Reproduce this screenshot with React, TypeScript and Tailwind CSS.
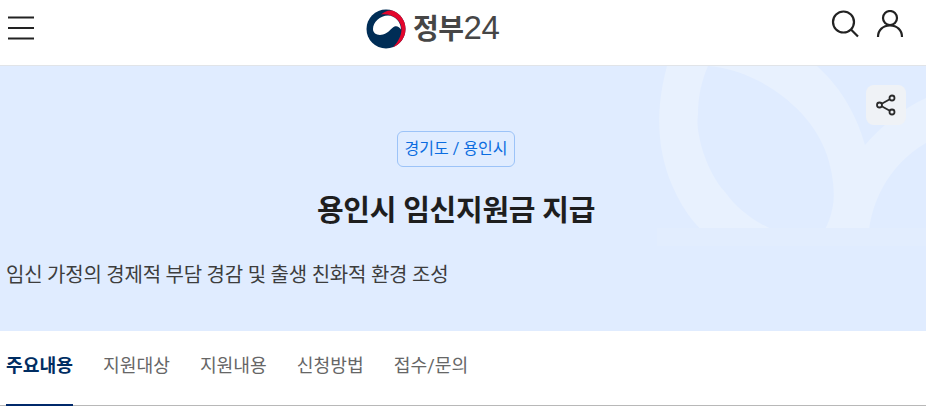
const tabs = ["주요내용", "지원대상", "지원내용", "신청방법", "접수/문의"];

function Logo() {
  return (
    <svg width="40" height="40" viewBox="0 0 40 40" className="shrink-0">
      <circle cx="20" cy="20" r="19.5" fill="#002d56" />
      <path d="M15 5.500C18 2.500 23 0.500 27 1.800A19.500 19.500 0 0 1 27 38.200C32 33 35.500 27 35.500 20C35.500 12 27 4 15 5.500Z" fill="#e2062c" />
      <path d="M7 20C7 13 14 6.500 22 6.500C29 6.500 35 13 35 20.500C33.500 18 31 16.500 28.500 17.500C25 19 23 24 17 25.500C12 26.800 7 25 7 20Z" fill="#fff" />
    </svg>
  );
}

export default function App() {
  return (
    <div className="w-[926px] bg-white font-['Roboto','Noto_Sans_CJK_KR',sans-serif]">
      {/* 상단 헤더 */}
      <header className="relative flex h-[66px] items-start justify-between border-b border-[#e1e4e8] pl-[8px] pr-[22px] pt-[10px]">
        <svg width="26" height="34" viewBox="0 0 26 34" fill="none" stroke="#222" strokeWidth="2" className="mt-[1px]">
          <path d="M0 6.500H26M0 17H26M0 27.500H26" />
        </svg>
        <div className="absolute left-[366px] top-[8px] flex items-center gap-[7px]">
          <Logo />
          <span className="flex items-baseline text-[#464646]">
            <span className="text-[28px] font-bold leading-[40px] tracking-[-0.5px]">정부</span>
            <span className="font-['Liberation_Sans'] text-[33px] leading-[40px] tracking-[-0.5px]">24</span>
          </span>
        </div>
        <div className="flex items-center gap-[16px]">
          <svg width="30" height="30" viewBox="0 0 30 30" fill="none" stroke="#222" strokeWidth="2.200">
            <circle cx="13.500" cy="12" r="10.500" />
            <path d="M21 19.500L28 26.500" />
          </svg>
          <svg width="28" height="30" viewBox="0 0 28 30" fill="none" stroke="#222" strokeWidth="2.200">
            <circle cx="14" cy="8" r="7" />
            <path d="M2 27C2 20 7 15.500 14 15.500C21 15.500 26 20 26 27" />
          </svg>
        </div>
      </header>

      {/* 히어로 */}
      <section className="relative h-[265px] overflow-hidden bg-[#e0ecff]">
        <svg className="absolute inset-0" width="926" height="265" viewBox="0 66 926 265" fill="none">
          <path
            d="M667 66C655 110 657 150 672 185C685 215 700 232 722 246H868C868 205 888 165 926 143V98C904 108 882 125 865 145C855 110 838 85 817 66Z"
            fill="#e8f1fe"
          />
          <path
            d="M708 66C760 70 810 110 825 150C833 170 836 195 832 210C829 225 822 235 817 240C780 238 745 220 725 192C705 170 695 130 698 115C698 95 702 80 708 66Z"
            fill="#e0ecff"
          />
          <rect x="657" y="228" width="269" height="18" fill="#e2edfe" />
        </svg>
        <button className="absolute left-[866px] top-[19px] flex h-[40px] w-[40px] items-center justify-center rounded-[8px] bg-[#eff2f6]">
          <svg width="22" height="22" viewBox="0 0 22 22" fill="none" stroke="#2a2a2a" strokeWidth="1.800">
            <circle cx="17" cy="4" r="2.500" />
            <circle cx="4.500" cy="11" r="2.500" />
            <circle cx="17" cy="18" r="2.500" />
            <path d="M6.700 9.800L14.800 5.200M6.700 12.200L14.800 16.800" />
          </svg>
        </button>
        <div className="relative flex flex-col items-center pr-[14px] pt-[65px]">
          <span className="rounded-[6px] border border-[#9cc3f8] px-[7px] py-[6px] text-[16px] leading-[22px] text-[#0b6ce0]">경기도 / 용인시</span>
          <h1 className="mt-[24px] text-[29px] font-bold leading-[40px] tracking-[-0.25px] text-[#1e1e1e]">용인시 임신지원금 지급</h1>
        </div>
        <p className="relative mt-[30px] pl-[6px] text-[20px] leading-[28px] tracking-[-0.23px] text-[#3d3d3d]">
          임신 가정의 경제적 부담 경감 및 출생 친화적 환경 조성
        </p>
      </section>

      {/* 탭 */}
      <nav className="flex h-[75px] gap-[30px] border-b border-[#b8b8b8] pl-[6px]">
        {tabs.map((tab, i) => (
          <div
            key={tab}
            className={
              i === 0
                ? "h-[75px] border-b-2 border-[#00296b] pt-[21px] text-[18.2px] font-bold leading-[28px] text-[#002d62]"
                : "h-[75px] pt-[21px] text-[18.2px] leading-[28px] text-[#666666]"
            }
          >
            {tab}
          </div>
        ))}
      </nav>
    </div>
  );
}
